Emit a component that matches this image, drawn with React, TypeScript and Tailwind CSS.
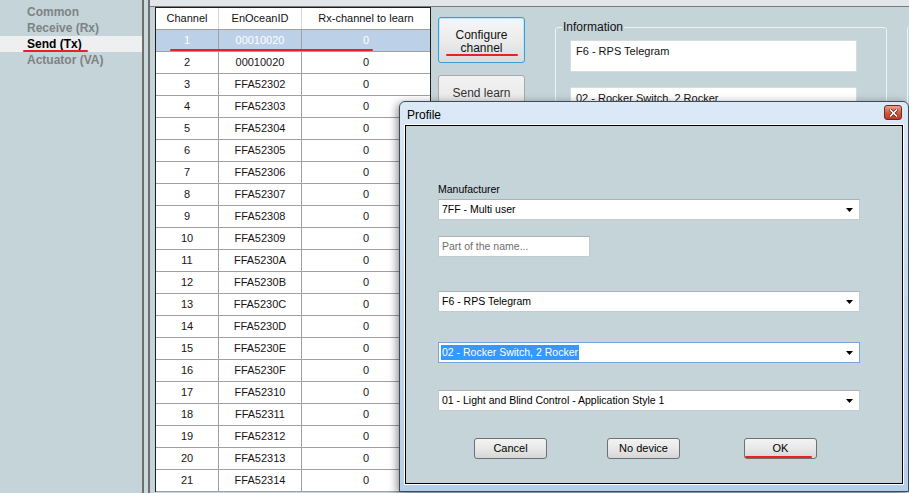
import React from "react";

const ids = [
  "00010020", "00010020", "FFA52302", "FFA52303", "FFA52304", "FFA52305", "FFA52306",
  "FFA52307", "FFA52308", "FFA52309", "FFA5230A", "FFA5230B", "FFA5230C", "FFA5230D",
  "FFA5230E", "FFA5230F", "FFA52310", "FFA52311", "FFA52312", "FFA52313", "FFA52314",
];

export default function App() {
  return (
    <div className="relative w-[909px] h-[493px] overflow-hidden bg-[#c5d4d9] flex font-['Liberation_Sans',Arial,sans-serif] text-[#1a1a1a]">
      {/* side nav */}
      <div className="w-[144px] shrink-0 border-r-2 border-[#6e6e6e] pt-[4px] text-[12px] font-bold">
        <NavItem label="Common" />
        <NavItem label="Receive (Rx)" />
        <NavItem label="Send (Tx)" active />
        <NavItem label="Actuator (VA)" />
      </div>
      <div className="w-[4px] shrink-0 bg-[#cbd8dc]" />

      {/* main tab */}
      <div className="flex-1 border-l-2 border-[#6e6e6e] flex flex-col">
        <div className="h-[7px] shrink-0 bg-[#e2e6e8] border-b border-[#7a7a7a]" />
        <div className="flex flex-1 pl-[5px]">
          <Table />
          <div className="ml-[7px] mt-[10px] flex flex-col gap-[12px] w-[87px] shrink-0">
            <button className="h-[46px] pt-[3px] rounded-[3px] border border-[#3c9ad6] shadow-[inset_0_0_0_1px_#bfe6f9] bg-gradient-to-b from-[#f6f6f6] via-[#ececec] to-[#dadada] text-[12px] leading-[13px] text-[#111]">
              Configure
              <br />
              channel
            </button>
            <button className="h-[46px] pt-[3px] rounded-[3px] border border-[#a9a9a9] bg-gradient-to-b from-[#f2f2f2] to-[#e2e2e2] text-[12px] leading-[13px] text-[#333]">
              Send learn
              <br />
              telegram
            </button>
          </div>
          <fieldset className="ml-[30px] mt-[13px] w-[332px] h-[200px] shrink-0 border border-[#eef3f5] rounded-[3px] pl-[14px] pr-[29px]">
            <legend className="-ml-[8px] px-[1px] text-[12px] leading-[14px] text-[#111]">Information</legend>
            <div className="mt-[6px] h-[32px] bg-white border border-[#d3dcdf] px-[5px] pt-[2px] text-[11px] text-[#111]">
              F6 - RPS Telegram
            </div>
            <div className="mt-[15px] h-[32px] bg-white border border-[#d3dcdf] px-[5px] pt-[2px] text-[11px] text-[#111]">
              02 - Rocker Switch, 2 Rocker
            </div>
          </fieldset>
          <div className="ml-[20px] mt-[20px] flex-1 border-l border-t border-[#eef3f5] rounded-tl-[3px]" />
        </div>
      </div>

      <ProfileDialog />

      {/* red annotation marks */}
      <div className="absolute left-[23px] top-[50px] w-[65px] h-[2px] rounded-full bg-[#e8202a]" />
      <div className="absolute left-[170px] top-[49px] w-[203px] h-[2px] rounded-full bg-[#e8202a]" />
      <div className="absolute left-[446px] top-[54px] w-[72px] h-[2px] rounded-full bg-[#e8202a]" />
      <div className="absolute left-[745px] top-[456px] w-[67px] h-[2px] rounded-full bg-[#e8202a]" />
    </div>
  );
}

function NavItem({ label, active }: { label: string; active?: boolean }) {
  return (
    <div
      className={`h-[16px] leading-[16px] pl-[27px] ${
        active ? "bg-[#eeeff0] text-black" : "text-[#7f8285]"
      }`}
    >
      {label}
    </div>
  );
}

function Table() {
  return (
    <div className="w-[276px] shrink-0 border-l border-r border-t border-[#1e1e1e] bg-white text-[11px] self-start">
      <div className="flex h-[22px] border-b border-[#a0a0a0] text-[#111]">
        <div className="w-[63px] border-r border-[#d6d6d6] flex items-center justify-center">Channel</div>
        <div className="w-[83px] border-r border-[#d6d6d6] flex items-center justify-center">EnOceanID</div>
        <div className="flex-1 flex items-center justify-center">Rx-channel to learn</div>
      </div>
      {ids.map((id, i) => {
        const sel = i === 0;
        return (
          <div
            key={i}
            className={`flex h-[22px] border-b border-[#a0a0a0] ${
              sel ? "bg-[#bcd0e8] text-white" : "text-[#1a1214]"
            }`}
          >
            <div className="w-[63px] border-r border-[#a0a0a0] flex items-center justify-center">{i + 1}</div>
            <div className="w-[83px] border-r border-[#a0a0a0] flex items-center justify-center">{id}</div>
            <div className="flex-1 flex items-center justify-center">0</div>
          </div>
        );
      })}
    </div>
  );
}

function ProfileDialog() {
  return (
    <div className="absolute left-[399px] top-[101px] w-[510px] h-[391px] border border-[#3e4a56] rounded-t-[6px] bg-gradient-to-b from-[#dce9f7] via-[#c4d9ef] to-[#b6cfe9] px-[4px] pb-[6px] flex flex-col shadow-[-2px_2px_8px_rgba(0,0,0,0.45)]">
      <div className="h-[22px] shrink-0 flex items-start justify-between pl-[3px]">
        <span className="pt-[2px] text-[12px] leading-[22px] text-black">Profile</span>
        <button className="mt-[3px] mr-[2px] w-[18px] h-[15px] rounded-[3px] border border-[#6e2a20] bg-gradient-to-b from-[#eba08c] via-[#d65a3f] to-[#c2391f] flex items-center justify-center">
          <svg width="9" height="8" viewBox="0 0 9 8">
            <path d="M1.5 1 L7.5 7 M7.5 1 L1.5 7" stroke="#5a1e16" strokeWidth="3" strokeLinecap="square" />
            <path d="M1.5 1 L7.5 7 M7.5 1 L1.5 7" stroke="#ffffff" strokeWidth="1.6" strokeLinecap="square" />
          </svg>
        </button>
      </div>
      <div className="flex-1 border border-white">
        <div className="h-full border border-black bg-[#c5d4d9] pl-[32px] pt-[57px] text-[10.5px] text-black flex flex-col">
          <div className="leading-[13px]">Manufacturer</div>
          <Select className="mt-[3px]" value="7FF - Multi user" />
          <div className="mt-[16px] w-[152px] h-[21px] bg-white border border-[#c3cbd0] border-t-[#abb1b6] pl-[3px] flex items-center text-[#6d6d6d]">
            Part of the name...
          </div>
          <Select className="mt-[34px]" value="F6 - RPS Telegram" />
          <Select className="mt-[30px]" value="02 - Rocker Switch, 2 Rocker" focused />
          <Select className="mt-[27px]" value="01 - Light and Blind Control - Application Style 1" />
          <div className="mt-[27px] flex">
            <DlgButton className="ml-[36px]" label="Cancel" />
            <DlgButton className="ml-[60px]" label="No device" />
            <DlgButton className="ml-[64px]" label="OK" />
          </div>
        </div>
      </div>
    </div>
  );
}

function Select({ value, focused, className = "" }: { value: string; focused?: boolean; className?: string }) {
  return (
    <div
      className={`w-[422px] h-[21px] bg-white border flex items-center pl-[2px] pr-[6px] ${
        focused ? "border-[#7aa7d8]" : "border-[#c3cbd0] border-t-[#abb1b6]"
      } ${className}`}
    >
      <span className={focused ? "bg-[#3399ff] text-white px-[1px] leading-[15px]" : "px-[1px]"}>{value}</span>
      <svg className="ml-auto" width="7" height="4" viewBox="0 0 7 4">
        <path d="M0 0 H7 L3.5 4 Z" fill="#000" />
      </svg>
    </div>
  );
}

function DlgButton({ label, className = "" }: { label: string; className?: string }) {
  return (
    <button
      className={`w-[73px] h-[21px] rounded-[3px] border border-[#707070] bg-gradient-to-b from-[#f3f3f3] via-[#e8e8e8] to-[#d6d6d6] text-[11px] text-black ${className}`}
    >
      {label}
    </button>
  );
}
